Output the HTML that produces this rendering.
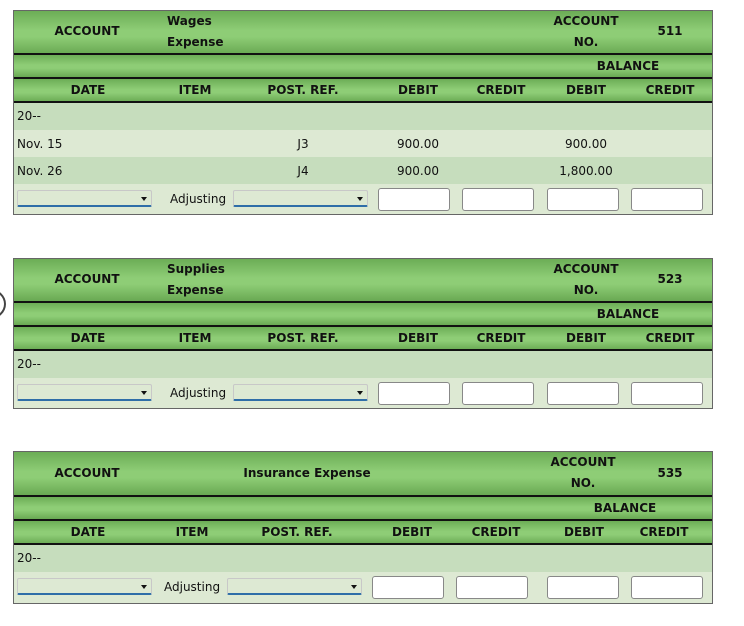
<!DOCTYPE html>
<html><head><meta charset="utf-8"><style>
*{box-sizing:border-box;margin:0;padding:0}
body{width:744px;height:626px;background:#fff;position:relative;overflow:hidden;font-family:"DejaVu Sans",Verdana,sans-serif;color:#111}
.t{position:absolute;left:13px;width:700px;border:1px solid #666;background:#dde9d3}
.g{position:absolute;left:0;width:698px;background:linear-gradient(180deg,#6cad56 0%,#8ecd76 45%,#8ecd76 60%,#69a953 100%)}
.k{position:absolute;left:0;width:698px;height:2px;background:#111}
.r{position:absolute;left:0;width:698px}
.d{background:#c6ddbd}.l{background:#dde9d3}
.b{position:absolute;font-weight:bold;font-size:12px;text-align:center;white-space:nowrap;transform:translateX(-50%)}
.x{position:absolute;font-size:12px;white-space:nowrap}
.c{position:absolute;font-size:12px;white-space:nowrap;transform:translateX(-50%)}
.s{position:absolute;height:17px;width:135px;background:#dde9d3;border:1px solid #c8c8c8;border-bottom:2px solid #2f6ea8;border-radius:2px}
.s:after{content:"";position:absolute;right:4px;top:6px;border-left:3px solid transparent;border-right:3px solid transparent;border-top:4px solid #111}
.i{position:absolute;height:23px;width:72px;background:#fff;border:1px solid #888;border-radius:3px}
</style></head><body>
<div style="position:absolute;left:-26px;top:289px;width:32px;height:30px;border:2px solid #444;border-radius:50%"></div>

<!-- Table 1 -->
<div class="t" style="top:10px;height:205px">
 <div class="g" style="top:0;height:43px"></div>
 <div class="b" style="left:73px;top:13px">ACCOUNT</div>
 <div class="b" style="left:153px;top:0px;transform:none;text-align:left;line-height:21px">Wages<br>Expense</div>
 <div class="b" style="left:572px;top:0px;line-height:21px">ACCOUNT<br>NO.</div>
 <div class="b" style="left:656px;top:13px">511</div>
 <div class="k" style="top:42px"></div>
 <div class="g" style="top:44px;height:22px"></div>
 <div class="b" style="left:614px;top:48px">BALANCE</div>
 <div class="k" style="top:66px"></div>
 <div class="g" style="top:68px;height:23px"></div>
 <div class="b" style="left:74px;top:72px">DATE</div><div class="b" style="left:181px;top:72px">ITEM</div><div class="b" style="left:289px;top:72px">POST. REF.</div><div class="b" style="left:404px;top:72px">DEBIT</div><div class="b" style="left:487px;top:72px">CREDIT</div><div class="b" style="left:572px;top:72px">DEBIT</div><div class="b" style="left:656px;top:72px">CREDIT</div>
 <div class="k" style="top:90px"></div>
 <div class="r d" style="top:92px;height:27px"></div><div class="x" style="left:3px;top:98px">20--</div>
 <div class="r l" style="top:119px;height:27px"></div><div class="x" style="left:3px;top:126px">Nov. 15</div><div class="c" style="left:289px;top:126px">J3</div><div class="c" style="left:404px;top:126px">900.00</div><div class="c" style="left:572px;top:126px">900.00</div>
 <div class="r d" style="top:146px;height:27px"></div><div class="x" style="left:3px;top:153px">Nov. 26</div><div class="c" style="left:289px;top:153px">J4</div><div class="c" style="left:404px;top:153px">900.00</div><div class="c" style="left:572px;top:153px">1,800.00</div>
 <div class="s" style="left:3px;top:179px"></div><div class="x" style="left:156px;top:181px">Adjusting</div><div class="s" style="left:219px;top:179px"></div>
 <div class="i" style="left:364px;top:177px"></div><div class="i" style="left:448px;top:177px"></div><div class="i" style="left:533px;top:177px"></div><div class="i" style="left:617px;top:177px"></div>
</div>

<!-- Table 2 -->
<div class="t" style="top:258px;height:151px">
 <div class="g" style="top:0;height:42px"></div>
 <div class="b" style="left:73px;top:13px">ACCOUNT</div>
 <div class="b" style="left:153px;top:0px;transform:none;text-align:left;line-height:21px">Supplies<br>Expense</div>
 <div class="b" style="left:572px;top:0px;line-height:21px">ACCOUNT<br>NO.</div>
 <div class="b" style="left:656px;top:13px">523</div>
 <div class="k" style="top:42px"></div>
 <div class="g" style="top:44px;height:22px"></div>
 <div class="b" style="left:614px;top:48px">BALANCE</div>
 <div class="k" style="top:66px"></div>
 <div class="g" style="top:68px;height:23px"></div>
 <div class="b" style="left:74px;top:72px">DATE</div><div class="b" style="left:181px;top:72px">ITEM</div><div class="b" style="left:289px;top:72px">POST. REF.</div><div class="b" style="left:404px;top:72px">DEBIT</div><div class="b" style="left:487px;top:72px">CREDIT</div><div class="b" style="left:572px;top:72px">DEBIT</div><div class="b" style="left:656px;top:72px">CREDIT</div>
 <div class="k" style="top:90px"></div>
 <div class="r d" style="top:92px;height:27px"></div><div class="x" style="left:3px;top:98px">20--</div>
 <div class="s" style="left:3px;top:125px"></div><div class="x" style="left:156px;top:127px">Adjusting</div><div class="s" style="left:219px;top:125px"></div>
 <div class="i" style="left:364px;top:123px"></div><div class="i" style="left:448px;top:123px"></div><div class="i" style="left:533px;top:123px"></div><div class="i" style="left:617px;top:123px"></div>
</div>

<!-- Table 3 -->
<div class="t" style="top:451px;height:153px">
 <div class="g" style="top:0;height:43px"></div>
 <div class="b" style="left:73px;top:14px">ACCOUNT</div>
 <div class="b" style="left:293px;top:14px">Insurance Expense</div>
 <div class="b" style="left:569px;top:0px;line-height:21px">ACCOUNT<br>NO.</div>
 <div class="b" style="left:656px;top:14px">535</div>
 <div class="k" style="top:43px"></div>
 <div class="g" style="top:45px;height:22px"></div>
 <div class="b" style="left:611px;top:49px">BALANCE</div>
 <div class="k" style="top:67px"></div>
 <div class="g" style="top:69px;height:23px"></div>
 <div class="b" style="left:74px;top:73px">DATE</div><div class="b" style="left:178px;top:73px">ITEM</div><div class="b" style="left:283px;top:73px">POST. REF.</div><div class="b" style="left:398px;top:73px">DEBIT</div><div class="b" style="left:482px;top:73px">CREDIT</div><div class="b" style="left:570px;top:73px">DEBIT</div><div class="b" style="left:650px;top:73px">CREDIT</div>
 <div class="k" style="top:91px"></div>
 <div class="r d" style="top:93px;height:27px"></div><div class="x" style="left:3px;top:99px">20--</div>
 <div class="s" style="left:3px;top:126px"></div><div class="x" style="left:150px;top:128px">Adjusting</div><div class="s" style="left:213px;top:126px"></div>
 <div class="i" style="left:358px;top:124px"></div><div class="i" style="left:442px;top:124px"></div><div class="i" style="left:533px;top:124px"></div><div class="i" style="left:617px;top:124px"></div>
</div>
</body></html>
